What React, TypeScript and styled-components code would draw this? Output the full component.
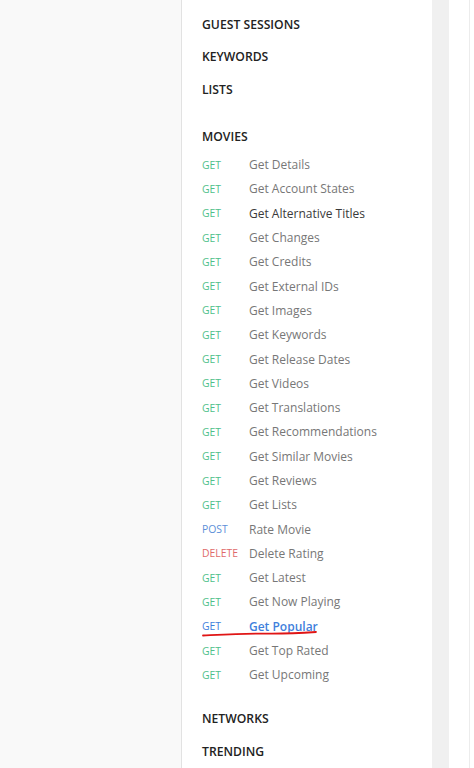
import React from "react";
import styled, { createGlobalStyle } from "styled-components";

const Global = createGlobalStyle`
  html, body { margin: 0; padding: 0; background: #f9f9f9; }
  body { font-family: "Open Sans", "Liberation Sans", sans-serif; }
`;

const Page = styled.div`
  display: flex;
  height: 768px;
  overflow: hidden;
`;

const LeftPane = styled.div`
  width: 181px;
  flex: none;
  background: #f9f9f9;
  border-right: 1px solid #e2e2e2;
`;

const Sidebar = styled.nav`
  width: 230px;
  flex: none;
  background: #fff;
  padding: 8px 0 0 20px;
  display: flex;
  flex-direction: column;
`;

const Gutter = styled.div`
  width: 17px;
  flex: none;
  background: #f0f0f0;
`;

const RightPane = styled.div`
  width: 20px;
  flex: none;
  background: #fff;
  border-right: 1px solid #ececec;
`;

const Rest = styled.div`
  flex: 1;
  background: #fff;
`;

const Heading = styled.div<{ $gap?: number }>`
  height: 32.5px;
  display: flex;
  align-items: center;
  margin-top: ${(p) => p.$gap ?? 0}px;
  font-size: 12.2px;
  font-weight: 600;
  color: #222;
`;

const Item = styled.div`
  position: relative;
  height: 24.3px;
  display: flex;
  align-items: center;
`;

const methodColors: Record<string, string> = {
  GET: "#4fbf8a",
  POST: "#5c8fd8",
  DELETE: "#e06a6a",
  ACTIVE: "#3f7fdc",
};

const Method = styled.span<{ $color: string }>`
  width: 47px;
  flex: none;
  font-size: 10.4px;
  color: ${(p) => p.$color};
`;

const Title = styled.span<{ $tone: "normal" | "dark" | "active" }>`
  font-size: 12px;
  color: ${(p) =>
    p.$tone === "dark" ? "#3a3a3a" : p.$tone === "active" ? "#3f7fdc" : "#777"};
  font-weight: ${(p) => (p.$tone === "active" ? 600 : 400)};
`;

const Scribble = styled.svg`
  position: absolute;
  left: 0;
  top: 16px;
  width: 120px;
  height: 8px;
  overflow: visible;
  pointer-events: none;
`;

type Endpoint = { m: string; t: string; tone?: "normal" | "dark" | "active" };

const movies: Endpoint[] = [
  { m: "GET", t: "Get Details" },
  { m: "GET", t: "Get Account States" },
  { m: "GET", t: "Get Alternative Titles", tone: "dark" },
  { m: "GET", t: "Get Changes" },
  { m: "GET", t: "Get Credits" },
  { m: "GET", t: "Get External IDs" },
  { m: "GET", t: "Get Images" },
  { m: "GET", t: "Get Keywords" },
  { m: "GET", t: "Get Release Dates" },
  { m: "GET", t: "Get Videos" },
  { m: "GET", t: "Get Translations" },
  { m: "GET", t: "Get Recommendations" },
  { m: "GET", t: "Get Similar Movies" },
  { m: "GET", t: "Get Reviews" },
  { m: "GET", t: "Get Lists" },
  { m: "POST", t: "Rate Movie" },
  { m: "DELETE", t: "Delete Rating" },
  { m: "GET", t: "Get Latest" },
  { m: "GET", t: "Get Now Playing" },
  { m: "GET", t: "Get Popular", tone: "active" },
  { m: "GET", t: "Get Top Rated" },
  { m: "GET", t: "Get Upcoming" },
];

export default function App() {
  return (
    <>
      <Global />
      <Page>
        <LeftPane />
        <Sidebar>
          <Heading>GUEST SESSIONS</Heading>
          <Heading>KEYWORDS</Heading>
          <Heading>LISTS</Heading>
          <Heading $gap={14.5}>MOVIES</Heading>
          {movies.map((e, i) => {
            const tone = e.tone ?? "normal";
            return (
              <Item key={i}>
                <Method $color={tone === "active" ? methodColors.ACTIVE : methodColors[e.m]}>
                  {e.m}
                </Method>
                <Title $tone={tone}>{e.t}</Title>
                {tone === "active" && (
                  <Scribble viewBox="0 0 120 8">
                    <path
                      d="M1 5.5 C 20 4.5, 40 3.2, 60 3.6 C 80 4, 100 3, 114 2"
                      stroke="#e01515"
                      strokeWidth="1.8"
                      fill="none"
                      strokeLinecap="round"
                    />
                  </Scribble>
                )}
              </Item>
            );
          })}
          <Heading $gap={15.5}>NETWORKS</Heading>
          <Heading>TRENDING</Heading>
        </Sidebar>
        <Gutter />
        <RightPane />
        <Rest />
      </Page>
    </>
  );
}
